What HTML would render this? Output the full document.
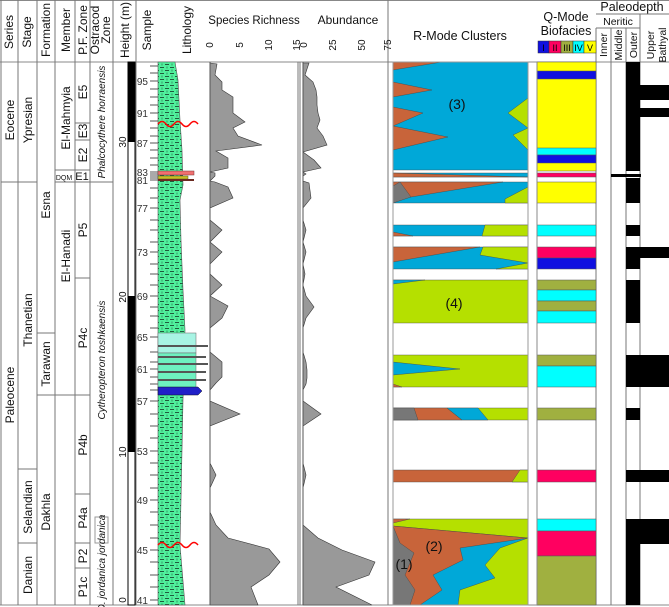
<!DOCTYPE html>
<html><head><meta charset="utf-8"><style>
html,body{margin:0;padding:0;background:#fff;}
svg{display:block;font-family:"Liberation Sans",sans-serif;}
</style></head><body>
<svg width="669" height="607" viewBox="0 0 669 607" xmlns="http://www.w3.org/2000/svg">
<defs>
<pattern id="lith" width="10" height="6" patternUnits="userSpaceOnUse">
<rect width="10" height="6" fill="#50f09c"/>
<path d="M0 1.5h4M5 4.5h4" stroke="#1f5a3c" stroke-width="0.9"/>
<path d="M7 0.5v2M2 3.5v2" stroke="#1f5a3c" stroke-width="0.6"/>
</pattern>
</defs>
<rect width="669" height="607" fill="#fff"/>
<line x1="0" y1="0.5" x2="669" y2="0.5" stroke="#888"/>
<line x1="0" y1="62" x2="669" y2="62" stroke="#888"/>
<line x1="0" y1="605" x2="669" y2="605" stroke="#888"/>
<g stroke="#777" stroke-width="1">
<line x1="1" y1="0" x2="1" y2="605"/>
<line x1="18" y1="0" x2="18" y2="605"/>
<line x1="37" y1="0" x2="37" y2="605"/>
<line x1="55" y1="0" x2="55" y2="605"/>
<line x1="75" y1="0" x2="75" y2="605"/>
<line x1="90" y1="0" x2="90" y2="605"/>
<line x1="113" y1="0" x2="113" y2="605"/>
<line x1="136" y1="0" x2="136" y2="605"/>
<line x1="298" y1="62" x2="298" y2="605"/>
<line x1="300" y1="62" x2="300" y2="605"/>
<line x1="388" y1="0" x2="388" y2="605"/>
<line x1="596" y1="28" x2="596" y2="605"/>
<line x1="611" y1="28" x2="611" y2="605"/>
<line x1="626" y1="28" x2="626" y2="605"/>
<line x1="640" y1="14" x2="640" y2="605"/>
<line x1="596" y1="14" x2="669" y2="14"/>
<line x1="596" y1="28" x2="640" y2="28"/>
</g>
<g stroke="#777">
<line x1="1" y1="182" x2="37" y2="182"/>
<line x1="18" y1="469" x2="37" y2="469"/>
<line x1="18" y1="543" x2="37" y2="543"/>
<line x1="37" y1="333" x2="55" y2="333"/>
<line x1="37" y1="395" x2="90" y2="395"/>
<line x1="55" y1="170" x2="90" y2="170"/>
<line x1="55" y1="182" x2="113" y2="182"/>
<line x1="75" y1="123" x2="90" y2="123"/>
<line x1="75" y1="140" x2="90" y2="140"/>
<line x1="75" y1="278" x2="90" y2="278"/>
<line x1="75" y1="494" x2="90" y2="494"/>
<line x1="75" y1="543" x2="90" y2="543"/>
<line x1="75" y1="568" x2="90" y2="568"/>
<rect x="95" y="517" width="13" height="26" fill="none" stroke="#999"/>
</g>
<g font-size="12" fill="#111" text-anchor="middle">
<text transform="translate(13,32) rotate(-90)">Series</text>
<text transform="translate(31,32) rotate(-90)">Stage</text>
<text transform="translate(50,30) rotate(-90)">Formation</text>
<text transform="translate(70,30) rotate(-90)">Member</text>
<text transform="translate(87,30) rotate(-90)">P.F. Zone</text>
<text transform="translate(99,30) rotate(-90)">Ostracod</text>
<text transform="translate(110,30) rotate(-90)">Zone</text>
<text transform="translate(129,30) rotate(-90)">Height (m)</text>
<text transform="translate(151,30) rotate(-90)">Sample</text>
<text transform="translate(191,30) rotate(-90)">Lithology</text>
<text x="254" y="24" font-size="11.5">Species Richness</text>
<text x="348" y="24">Abundance</text>
<text x="460" y="40" font-size="12.5">R-Mode Clusters</text>
<text x="566" y="21" font-size="12.5">Q-Mode</text>
<text x="566" y="35" font-size="12.5">Biofacies</text>
<text x="632" y="11" font-size="12.5">Paleodepth</text>
<text x="618" y="25" font-size="10.5">Neritic</text>
<g font-size="10.5">
<text transform="translate(607,45) rotate(-90)">Inner</text>
<text transform="translate(622,45) rotate(-90)">Middle</text>
<text transform="translate(637,45) rotate(-90)">Outer</text>
<text transform="translate(654,45) rotate(-90)">Upper</text>
<text transform="translate(666,45) rotate(-90)">Bathyal</text>
</g>
<g font-size="10">
<text transform="translate(213,45) rotate(-90)">0</text>
<text transform="translate(243,45) rotate(-90)">5</text>
<text transform="translate(272,45) rotate(-90)">10</text>
<text transform="translate(300,45) rotate(-90)">15</text>
<text transform="translate(307,45) rotate(-90)">0</text>
<text transform="translate(336,45) rotate(-90)">25</text>
<text transform="translate(365,45) rotate(-90)">50</text>
<text transform="translate(391,45) rotate(-90)">75</text>
</g>
</g>
<g font-size="9" text-anchor="middle">
<rect x="538" y="41" width="11" height="12" fill="#1010e0" stroke="#333" stroke-width=".5"/><text x="543.5" y="51">I</text>
<rect x="549" y="41" width="12" height="12" fill="#ff0060" stroke="#333" stroke-width=".5"/><text x="555" y="51">II</text>
<rect x="561" y="41" width="12" height="12" fill="#a0b040" stroke="#333" stroke-width=".5"/><text x="567" y="51">III</text>
<rect x="573" y="41" width="11" height="12" fill="#00ffff" stroke="#333" stroke-width=".5"/><text x="578.5" y="51">IV</text>
<rect x="584" y="41" width="12" height="12" fill="#ffff00" stroke="#333" stroke-width=".5"/><text x="590" y="51">V</text>
</g>
<g font-size="12" fill="#111" text-anchor="middle">
<text transform="translate(14,120) rotate(-90)">Eocene</text>
<text transform="translate(14,395) rotate(-90)">Paleocene</text>
<text transform="translate(32,120) rotate(-90)">Ypresian</text>
<text transform="translate(32,320) rotate(-90)">Thanetian</text>
<text transform="translate(32,507) rotate(-90)">Selandian</text>
<text transform="translate(32,575) rotate(-90)">Danian</text>
<text transform="translate(50,205) rotate(-90)">Esna</text>
<text transform="translate(50,364) rotate(-90)">Tarawan</text>
<text transform="translate(50,512) rotate(-90)">Dakhla</text>
<text transform="translate(70,118) rotate(-90)">El-Mahmyia</text>
<text transform="translate(70,256) rotate(-90)">El-Hanadi</text>
<text transform="translate(87,92) rotate(-90)">E5</text>
<text transform="translate(87,131) rotate(-90)">E3</text>
<text transform="translate(87,155) rotate(-90)">E2</text>
<text x="82" y="180" font-size="11">E1</text>
<text x="64" y="180" font-size="7">DQM</text>
<text transform="translate(87,230) rotate(-90)">P5</text>
<text transform="translate(87,338) rotate(-90)">P4c</text>
<text transform="translate(87,445) rotate(-90)">P4b</text>
<text transform="translate(87,518) rotate(-90)">P4a</text>
<text transform="translate(87,556) rotate(-90)">P2</text>
<text transform="translate(87,587) rotate(-90)">P1c</text>
<g font-style="italic" font-size="10">
<text transform="translate(105,122) rotate(-90)">Phalcocythere horraensis</text>
<text transform="translate(105,360) rotate(-90)">Cytheropteron toshkaensis</text>
<text transform="translate(105,563) rotate(-90)">D. jordanica jordanica</text>
</g>
<g font-size="10">
<text transform="translate(126,142) rotate(-90)">30</text>
<text transform="translate(126,297) rotate(-90)">20</text>
<text transform="translate(126,452) rotate(-90)">10</text>
<text transform="translate(126,600) rotate(-90)">0</text>
</g>
</g>
<rect x="128" y="62" width="7" height="543" fill="#fff" stroke="#000" stroke-width="1"/>
<rect x="128" y="62" width="7" height="80" fill="#000"/>
<rect x="128" y="296" width="7" height="156" fill="#000"/>
<g font-size="10" fill="#333" text-anchor="end">
<text x="148" y="85">95</text><text x="148" y="117">91</text><text x="148" y="147">87</text>
<text x="148" y="176">83</text><text x="148" y="184">81</text><text x="148" y="212">77</text>
<text x="148" y="256">73</text><text x="148" y="300">69</text><text x="148" y="341">65</text>
<text x="148" y="373">61</text><text x="148" y="405">57</text><text x="148" y="455">53</text>
<text x="148" y="504">49</text><text x="148" y="554">45</text><text x="148" y="604">41</text>
</g>
<g stroke="#555" stroke-width="1">
<path d="M150 66h8M150 73h8M150 81h8M150 89h8M150 97h8M150 105h8M150 113h8M150 121h8M150 128h8M150 136h8M150 143h8M150 150h8M150 158h8M150 165h8M150 172h8M150 174h8M150 176h8M150 178h8M150 180h8M150 188h8M150 198h8M150 208h8M150 220h8M150 230h8M150 242h8M150 252h8M150 264h8M150 274h8M150 285h8M150 296h8M150 307h8M150 316h8M150 328h8M150 337h8M150 352h8M150 362h8M150 369h8M150 377h8M150 384h8M150 390h8M150 401h8M150 414h8M150 426h8M150 438h8M150 451h8M150 463h8M150 475h8M150 488h8M150 500h8M150 512h8M150 525h8M150 538h8M150 550h8M150 562h8M150 575h8M150 587h8M150 600h8"/>
</g>
<path d="M158 62 L175 62 L178 80 L180 120 L182 150 L183 185 L180 200 L181 240 L183 290 L185 330 L183 400 L182 450 L181 500 L180 545 L185 605 L158 605Z" fill="url(#lith)" stroke="#555" stroke-width=".6"/>
<rect x="158" y="333" width="38" height="20" fill="#a8f4e4" stroke="#666" stroke-width=".5"/>
<rect x="158" y="353" width="38" height="35" fill="#6ef0c0" stroke="#666" stroke-width=".5"/>
<g stroke="#555" stroke-width="2"><path d="M158 346h50M158 357h48M158 364h50M158 372h48M158 380h48"/></g>
<path d="M158 387h40l4 4-4 4h-40z" fill="#2020c8" stroke="#112" stroke-width=".5"/>
<rect x="158" y="171" width="36" height="4" fill="#f07070" stroke="#733" stroke-width=".5"/>
<rect x="158" y="176" width="30" height="3" fill="#c8c020" stroke="#553" stroke-width=".5"/>
<rect x="158" y="179" width="36" height="2" fill="#6a2a20"/>
<path d="M158 124 q4-5 8 0 t8 0 t8 0 t8 0 t8 0" fill="none" stroke="#f00" stroke-width="1.5"/>
<path d="M158 545 q4-5 8 0 t8 0 t8 0 t8 0 t8 0" fill="none" stroke="#f00" stroke-width="1.5"/>
<path d="M210 63 L217 64 L215 75 L222 82 L222 90 L233 97 L233 107 L233 113 L245 122 L233 128 L238 136 L262 145 L216 151 L228 158 L228 168 L210 172 L215 173 L215 176 L210 181 L215 182 L228 187 L233 198 L210 208 L210 220 L222 230 L210 242 L222 252 L210 264 L210 274 L222 285 L210 296 L228 306 L222 318 L210 328 L210 352 L222 362 L222 369 L222 377 L216 383 L210 390 L210 401 L240 414 L210 426 L210 463 L216 475 L210 488 L210 512 L216 525 L228 538 L269 549 L280 562 L269 575 L251 587 L258 605 L210 605Z" fill="#999" stroke="#333" stroke-width=".6"/>
<line x1="210" y1="62" x2="210" y2="605" stroke="#555"/>
<path d="M303 63 L309 63 L305 75 L313 82 L316 90 L317 97 L317 105 L318 113 L320 120 L317 128 L323 136 L327 145 L303 152 L314 160 L321 168 L303 172 L306 174 L303 176 L303 181 L309 183 L311 198 L303 208 L303 220 L306 230 L303 242 L306 252 L303 264 L305 274 L303 285 L306 296 L314 307 L306 318 L303 328 L303 352 L306 362 L307 370 L307 378 L306 384 L303 390 L303 401 L321 414 L303 426 L303 463 L306 475 L303 488 L303 525 L318 538 L342 550 L375 562 L369 575 L336 587 L372 605 L303 605Z" fill="#999" stroke="#333" stroke-width=".6"/>
<line x1="303" y1="62" x2="303" y2="605" stroke="#555"/>
<g stroke="#444" stroke-width=".4">
<rect x="393" y="62" width="135" height="108" fill="#00a8d8"/>
<path d="M393 62 L442 62 L393 70Z" fill="#c8643a"/>
<path d="M393 82 L432 90 L393 97Z" fill="#c8643a"/>
<path d="M393 107 L423 113 L393 126 L448 137 L393 150Z" fill="#c8643a"/>
<path d="M528 98 L508 113 L528 128 L513 135 L528 150Z" fill="#b5e000"/>
<rect x="393" y="173" width="135" height="4" fill="#00a8d8"/>
<path d="M393 173 L528 177 L393 177Z" fill="#c8643a"/>
<rect x="393" y="182" width="135" height="21" fill="#00a8d8"/>
<path d="M393 182 L503 182 L411 197 L393 198Z" fill="#c8643a"/>
<path d="M393 186 L400 182 L411 197 L393 203Z" fill="#777"/>
<path d="M528 187 L505 199 L505 203 L528 203Z" fill="#b5e000"/>
<rect x="393" y="225" width="135" height="11" fill="#00a8d8"/>
<path d="M485 225 L528 225 L528 236 L482 236Z" fill="#b5e000"/>
<path d="M393 232 L413 236 L393 236Z" fill="#c8643a"/>
<rect x="393" y="247" width="135" height="22" fill="#00a8d8"/>
<path d="M393 247 L480 247 L393 262Z" fill="#c8643a"/>
<path d="M483 247 L528 247 L528 263 L480 255Z" fill="#b5e000"/>
<path d="M496 269 L528 263 L528 269Z" fill="#b5e000"/>
<rect x="393" y="280" width="135" height="43" fill="#b5e000"/>
<path d="M393 280 L425 280 L393 284Z" fill="#00a8d8"/>
<rect x="393" y="355" width="135" height="32" fill="#b5e000"/>
<path d="M393 362 L460 369 L393 375Z" fill="#00a8d8"/>
<path d="M393 384 L402 387 L393 387Z" fill="#c8643a"/>
<rect x="393" y="408" width="135" height="12" fill="#b5e000"/>
<path d="M393 408 L447 408 L462 420 L393 420Z" fill="#c8643a"/>
<path d="M447 408 L478 408 L488 420 L462 420Z" fill="#00a8d8"/>
<path d="M393 408 L414 408 L418 420 L393 420Z" fill="#777"/>
<rect x="393" y="470" width="135" height="12" fill="#c8643a"/>
<path d="M520 470 L528 470 L528 482 L512 482Z" fill="#b5e000"/>
<rect x="393" y="519" width="135" height="86" fill="#b5e000"/>
<path d="M393 519 L410 519 L393 523Z" fill="#c8643a"/>
<path d="M393 526 L528 538 L500 548 L485 565 L495 578 L460 590 L458 605 L393 605Z" fill="#00a8d8"/>
<path d="M393 526 L528 538 L460 548 L463 560 L433 575 L442 590 L420 605 L393 605Z" fill="#c8643a"/>
<path d="M393 526 L400 543 L414 553 L405 575 L415 590 L410 605 L393 605Z" fill="#777"/>
</g>
<g stroke="#999" fill="none"><rect x="393" y="62" width="135" height="543"/></g>
<g font-size="14" text-anchor="middle" fill="#111">
<text x="457" y="109">(3)</text>
<text x="454" y="308">(4)</text>
<text x="434" y="551">(2)</text>
<text x="404" y="569">(1)</text>
</g>
<g stroke="#555" stroke-width=".5">
<rect x="537" y="62" width="59" height="109" fill="#ffff00"/>
<rect x="537" y="71" width="59" height="8" fill="#1010e0"/>
<rect x="537" y="148" width="59" height="7" fill="#00ffff"/>
<rect x="537" y="155" width="59" height="8" fill="#1010e0"/>
<rect x="537" y="173" width="59" height="4" fill="#ff0060"/>
<rect x="537" y="182" width="59" height="21" fill="#ffff00"/>
<rect x="537" y="225" width="59" height="11" fill="#00ffff"/>
<rect x="537" y="247" width="59" height="11" fill="#ff0060"/>
<rect x="537" y="258" width="59" height="11" fill="#1010e0"/>
<rect x="537" y="280" width="59" height="10" fill="#a0b040"/>
<rect x="537" y="290" width="59" height="11" fill="#00ffff"/>
<rect x="537" y="301" width="59" height="10" fill="#a0b040"/>
<rect x="537" y="311" width="59" height="12" fill="#00ffff"/>
<rect x="537" y="355" width="59" height="11" fill="#a0b040"/>
<rect x="537" y="366" width="59" height="21" fill="#00ffff"/>
<rect x="537" y="408" width="59" height="12" fill="#a0b040"/>
<rect x="537" y="470" width="59" height="12" fill="#ff0060"/>
<rect x="537" y="519" width="59" height="12" fill="#00ffff"/>
<rect x="537" y="531" width="59" height="25" fill="#ff0060"/>
<rect x="537" y="556" width="59" height="49" fill="#a0b040"/>
</g>
<line x1="537" y1="62" x2="537" y2="605" stroke="#888"/>
<g fill="#000">
<rect x="626" y="62" width="14" height="109"/>
<rect x="640" y="85" width="29" height="15"/>
<rect x="640" y="108" width="29" height="9"/>
<rect x="611" y="174" width="30" height="3"/>
<rect x="626" y="178" width="14" height="25"/>
<rect x="626" y="225" width="14" height="11"/>
<rect x="626" y="247" width="14" height="22"/>
<rect x="640" y="247" width="29" height="11"/>
<rect x="626" y="280" width="14" height="43"/>
<rect x="626" y="355" width="43" height="32"/>
<rect x="626" y="408" width="14" height="12"/>
<rect x="626" y="470" width="43" height="12"/>
<rect x="626" y="519" width="14" height="86"/>
<rect x="640" y="519" width="29" height="25"/>
</g>
</svg>
</body></html>
